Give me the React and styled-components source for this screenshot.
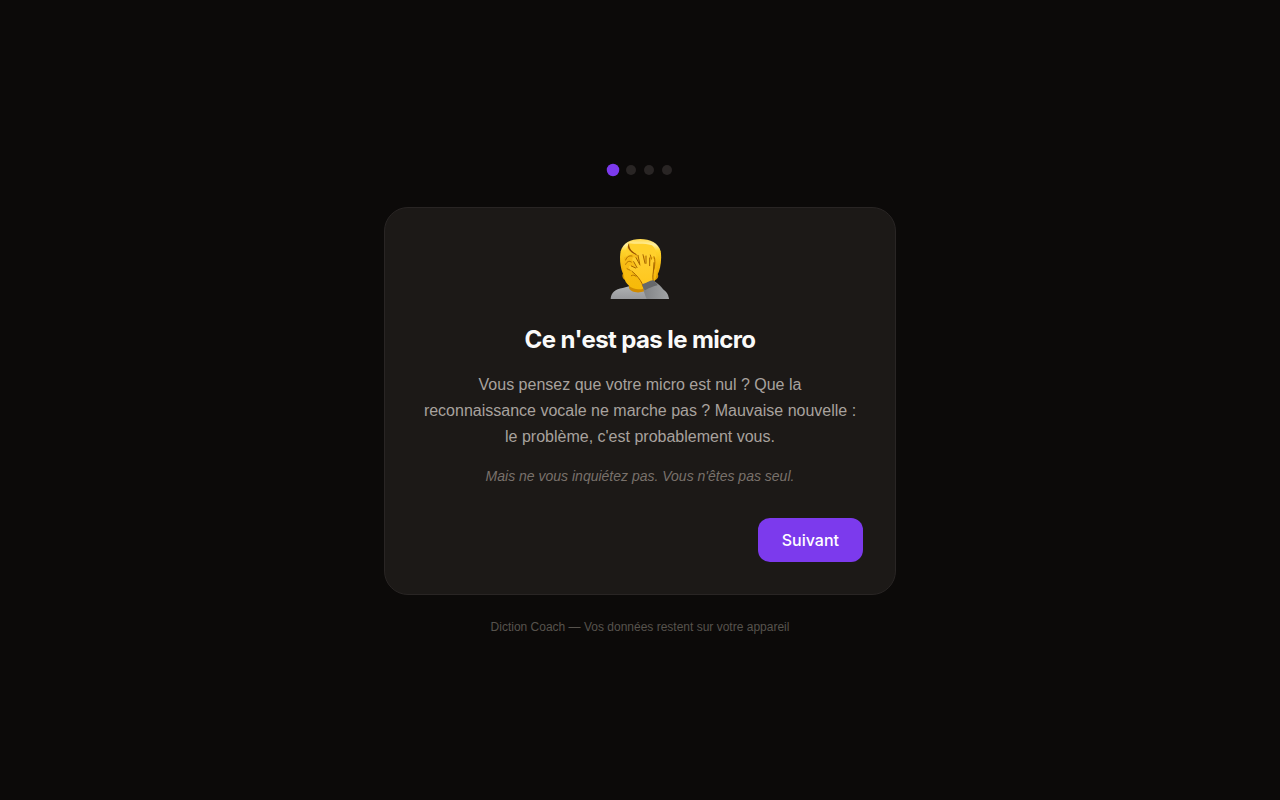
import { useState } from 'react';
import styled, { createGlobalStyle } from 'styled-components';

const GlobalStyle = createGlobalStyle`
  * {
    box-sizing: border-box;
  }

  body {
    margin: 0;
    background: #0c0a09;
    color: #fafaf9;
    font-family: 'Liberation Sans', Arial, sans-serif;
    -webkit-font-smoothing: antialiased;
  }
`;

const steps = ['Le micro', 'Le constat', 'La méthode', 'Commencer'];

const Page = styled.main`
  min-height: 100vh;
  padding: 24px;
  display: flex;
  flex-direction: column;
  align-items: center;
  justify-content: center;
`;

const Steps = styled.div`
  display: flex;
  gap: 8px;
  margin-bottom: 32px;
`;

const Dot = styled.button`
  width: 10px;
  height: 10px;
  padding: 0;
  border: none;
  border-radius: 50%;
  background: ${(props) => (props.$active ? '#7c3aed' : '#292524')};
  transform: ${(props) => (props.$active ? 'scale(1.25)' : 'none')};
  cursor: pointer;
`;

const Card = styled.section`
  width: 100%;
  max-width: 512px;
  padding: 32px;
  border: 1px solid #292524;
  border-radius: 24px;
  background: #1c1917;
  text-align: center;
`;

const Emoji = styled.svg`
  display: block;
  width: 60px;
  height: 60px;
  margin: 0 auto 24px;
  overflow: visible;
`;

const Title = styled.h1`
  margin: 0 0 16px;
  font-family: Inter, sans-serif;
  font-size: 24px;
  font-weight: 700;
  line-height: 32px;
  letter-spacing: -0.025em;
`;

const Text = styled.p`
  margin: 0 0 16px;
  color: #a8a29e;
  font-size: 16px;
  line-height: 26px;
`;

const Aside = styled.p`
  margin: 0;
  color: #79716b;
  font-size: 14px;
  font-style: italic;
  line-height: 20px;
`;

const Actions = styled.div`
  display: flex;
  justify-content: flex-end;
  margin-top: 32px;
`;

const Button = styled.button`
  padding: 10px 24px;
  border: none;
  border-radius: 12px;
  background: #7c3aed;
  color: #fff;
  font-family: Inter, sans-serif;
  font-size: 16px;
  font-weight: 500;
  line-height: 24px;
  cursor: pointer;

  &:hover {
    background: #6d28d9;
  }
`;

const Footer = styled.footer`
  margin-top: 24px;
  color: #57534d;
  font-size: 12px;
  line-height: 16px;
`;

function Facepalm() {
  return (
    <Emoji viewBox="30 30 180 180" role="img" aria-label="Facepalm">
      <defs>
        <linearGradient id="hair" x1="0" y1="0" x2="0" y2="1">
          <stop offset="0" stopColor="#ffd84a" />
          <stop offset=".16" stopColor="#fff0a0" />
          <stop offset=".32" stopColor="#ffd42c" />
          <stop offset="1" stopColor="#eda800" />
        </linearGradient>
        <linearGradient id="face" x1="0" y1="0" x2="0" y2="1">
          <stop offset="0" stopColor="#f8bc1c" />
          <stop offset="1" stopColor="#f7ba08" />
        </linearGradient>
        <linearGradient id="hand" x1="0" y1="0" x2="0" y2="1">
          <stop offset="0" stopColor="#ffd034" />
          <stop offset="1" stopColor="#ffc61c" />
        </linearGradient>
        <linearGradient id="shirt" x1="0" y1="0" x2="0" y2="1">
          <stop offset="0" stopColor="#b0b2b4" />
          <stop offset="1" stopColor="#98999c" />
        </linearGradient>
        <linearGradient id="arm" x1="0" y1="0" x2="1" y2="0">
          <stop offset="0" stopColor="#808285" />
          <stop offset="1" stopColor="#a2a4a6" />
        </linearGradient>
      </defs>
      <path d="M32 207C33 188 46 177 68 174L90 168H150L178 175C196 179 205 190 207 207Z" fill="url(#shirt)" />
      <path d="M87 160V174C91 186 112 191 134 184V150H87Z" fill="#d18b00" />
      <path d="M72 130C63 132 67 150 80 152ZM167 130C180 132 176 149 162 152Z" fill="#d99800" />
      <path d="M72 137C60 118 58 82 62 64C68 39 92 27 121 27C150 27 176 39 182 64C186 86 182 118 171 137Z" fill="url(#hair)" />
      <path d="M72 82C69 106 69 135 75 151C81 167 97 177 115 178C139 178 160 163 168 143C172 121 170 91 164 72L127 60Z" fill="url(#face)" />
      <path d="M87 40C80 50 77 66 77 80C82 76 84 71 88 65C102 75 119 80 139 78L169 83C170 68 166 54 156 46C132 39 105 43 87 40Z" fill="#ffd02b" />
      <path d="M87 40C80 50 85 60 96 68L112 77L108 71C97 66 87 57 87 40Z" fill="#984f00" />
      <path d="M77 90C80 80 88 76 96 78M77 103C82 93 88 92 94 96M81 116C87 121 94 122 99 119M151 75L155 89M162 80C166 91 165 105 162 118M94 137C99 134 104 135 108 139" fill="none" stroke="#b37100" strokeWidth="3" strokeLinecap="round" />
      <path d="M107 112L98 92C94 83 104 78 109 86L117 99L114 74C114 65 126 64 129 74L134 94L137 78C139 70 149 73 149 82L149 101L154 89C157 82 165 87 162 98L160 126C158 139 159 147 161 158L130 172C127 157 118 146 107 134L96 124C83 114 85 104 94 108Z" fill="url(#hand)" />
      <path d="M101 95L111 113M108 83L120 105M114 76L119 101M129 74L135 100M138 78L138 100M149 84L149 107M94 108L107 114M96 124L107 134C118 146 126 156 129 169M162 98L160 126C158 138 158 145 160 154" fill="none" stroke="#a66400" strokeWidth="3" strokeLinecap="round" />
      <path d="M160 152C178 161 195 181 207 207H140C134 193 130 180 128 164Z" fill="url(#arm)" />
      <path d="M127 162C137 162 148 151 159 151C165 154 170 160 173 166C160 168 148 174 135 181C130 177 128 170 127 162Z" fill="#66686b" />
    </Emoji>
  );
}

export default function App() {
  const [step, setStep] = useState(0);

  return (
    <>
      <GlobalStyle />
      <Page>
        <Steps>
          {steps.map((name, i) => (
            <Dot
              key={name}
              type="button"
              aria-label={name}
              $active={i === step}
              onClick={() => setStep(i)}
            />
          ))}
        </Steps>
        <Card>
          <Facepalm />
          <Title>Ce n'est pas le micro</Title>
          <Text>
            Vous pensez que votre micro est nul ? Que la
            <br />
            reconnaissance vocale ne marche pas ? Mauvaise nouvelle :
            <br />
            le problème, c'est probablement vous.
          </Text>
          <Aside>Mais ne vous inquiétez pas. Vous n'êtes pas seul.</Aside>
          <Actions>
            <Button
              type="button"
              onClick={() => setStep(Math.min(step + 1, steps.length - 1))}
            >
              Suivant
            </Button>
          </Actions>
        </Card>
        <Footer>Diction Coach — Vos données restent sur votre appareil</Footer>
      </Page>
    </>
  );
}
